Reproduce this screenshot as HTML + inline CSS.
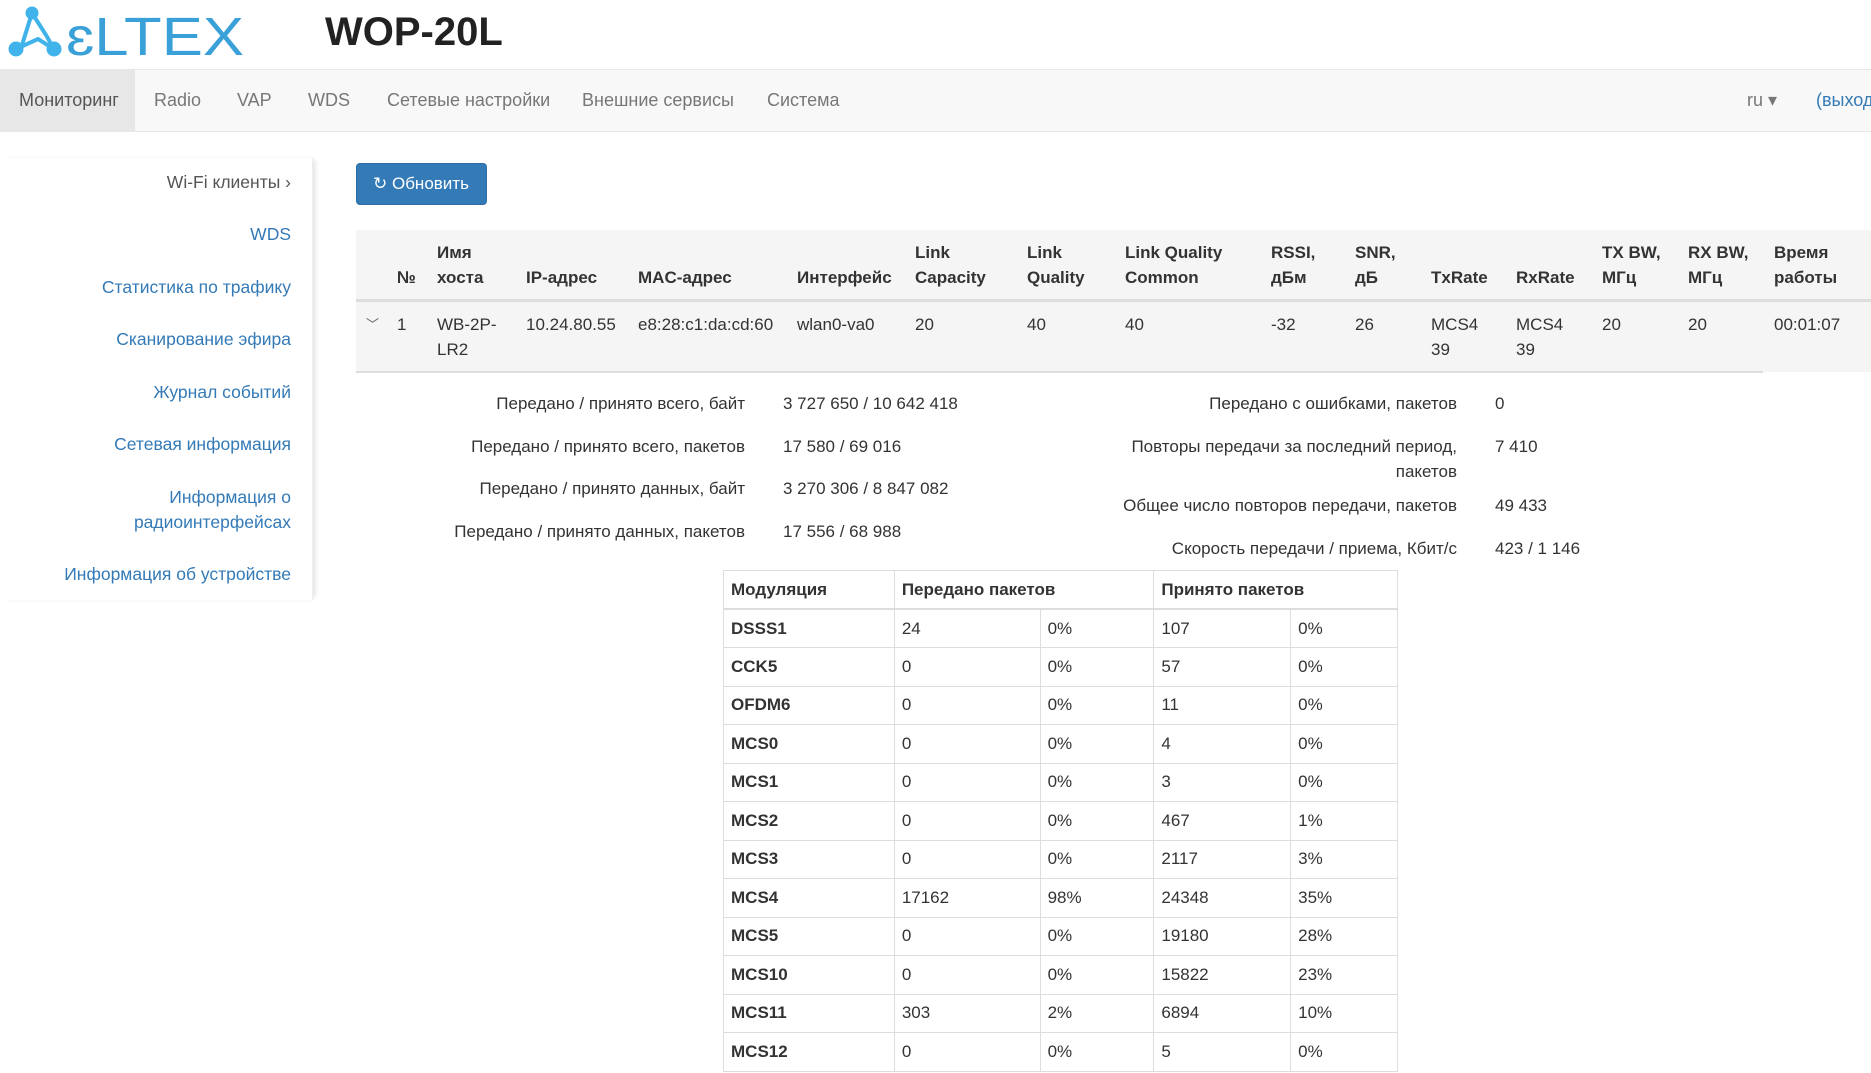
<!DOCTYPE html>
<html><head><meta charset="utf-8"><style>
*{box-sizing:border-box;margin:0;padding:0}
body{width:1871px;height:1073px;overflow:hidden;background:#fff;font-family:"Liberation Sans",Arial,sans-serif;color:#333;font-size:17px;position:relative}
.a{position:absolute;white-space:nowrap}
.nav{position:absolute;left:0;top:69px;width:1871px;height:63px;background:#f8f8f8;border-top:1px solid #e7e7e7;border-bottom:1px solid #e7e7e7}
.nav .act{position:absolute;left:0;top:0;width:135px;height:62px;background:#e7e7e7}
.nav span{position:absolute;top:20px;font-size:18px;color:#777}
.side{position:absolute;left:0;top:158px;width:313px;height:442px;border-right:1px solid #eee;box-shadow:4px 0 5px -2px rgba(0,0,0,.12)}
.side a{position:absolute;right:21px;color:#337ab7;text-decoration:none;font-size:17.5px;text-align:right;line-height:25px}
.btn{position:absolute;left:356px;top:163px;width:131px;height:42px;background:#337ab7;border:1px solid #2e6da4;border-radius:4px;color:#fff;font-size:17px;line-height:40px;padding-left:16px}
.th{position:absolute;font-weight:bold;font-size:17px;line-height:25px;color:#333}
.td{position:absolute;font-size:17px;line-height:25px;color:#333}
.lbl{position:absolute;text-align:right;font-size:17px;line-height:25px}
table.m{position:absolute;left:723px;top:570px;width:675px;border-collapse:collapse;font-size:17px}
table.m td,table.m th{border:1px solid #ddd;height:38.5px;padding:0 7px;text-align:left;vertical-align:middle}
table.m th{border-bottom:2px solid #ddd}
table.m td:first-child{font-weight:bold}
</style></head><body>
<svg class="a" style="left:8px;top:5px" width="240" height="54" viewBox="0 0 240 54">
<g fill="#40b4ea" stroke="#40b4ea"><circle cx="24" cy="8" r="6"/><circle cx="8" cy="44" r="7"/><circle cx="46" cy="44" r="7"/>
<path d="M24 8 L14 40 M24 8 L38 30 L46 44 M8 44 L30 34 L46 44" stroke-width="4" fill="none"/></g>
<text x="58" y="50" font-family="Liberation Sans,sans-serif" font-size="54" fill="#3aa0d8" textLength="178" lengthAdjust="spacingAndGlyphs">ɛLTEX</text>
</svg>
<div class="a" style="left:325px;top:10px;font-size:40px;font-weight:bold;color:#222">WOP-20L</div>
<div class="nav"><div class="act"></div>
<span style="left:19px;color:#555">Мониторинг</span><span style="left:154px">Radio</span><span style="left:237px">VAP</span><span style="left:308px">WDS</span><span style="left:387px">Сетевые настройки</span><span style="left:582px">Внешние сервисы</span><span style="left:767px">Система</span><span style="left:1747px">ru ▾</span><span style="left:1816px;color:#337ab7">(выход</span></div>
<div class="side">
<a style="top:12px;color:#555">Wi-Fi клиенты ›</a>
<a style="top:64px">WDS</a><a style="top:117px">Статистика по трафику</a><a style="top:169px">Сканирование эфира</a><a style="top:222px">Журнал событий</a><a style="top:274px">Сетевая информация</a><a style="top:327px">Информация о<br>радиоинтерфейсах</a><a style="top:404px">Информация об устройстве</a></div>
<div class="btn">↻ Обновить</div>
<div class="a" style="left:356px;top:230px;width:1515px;height:72px;background:#f5f5f5;border-bottom:3px solid #ddd"></div>
<div class="a" style="left:356px;top:302px;width:1515px;height:70px;background:#f5f5f5"></div>
<div class="a" style="left:356px;top:371px;width:1407px;height:2px;background:#ddd"></div>
<div class="th" style="left:397px;top:265px">№</div>
<div class="th" style="left:437px;top:240px">Имя<br>хоста</div>
<div class="th" style="left:526px;top:265px">IP-адрес</div>
<div class="th" style="left:638px;top:265px">MAC-адрес</div>
<div class="th" style="left:797px;top:265px">Интерфейс</div>
<div class="th" style="left:915px;top:240px">Link<br>Capacity</div>
<div class="th" style="left:1027px;top:240px">Link<br>Quality</div>
<div class="th" style="left:1125px;top:240px">Link Quality<br>Common</div>
<div class="th" style="left:1271px;top:240px">RSSI,<br>дБм</div>
<div class="th" style="left:1355px;top:240px">SNR,<br>дБ</div>
<div class="th" style="left:1431px;top:265px">TxRate</div>
<div class="th" style="left:1516px;top:265px">RxRate</div>
<div class="th" style="left:1602px;top:240px">TX BW,<br>МГц</div>
<div class="th" style="left:1688px;top:240px">RX BW,<br>МГц</div>
<div class="th" style="left:1774px;top:240px">Время<br>работы</div>
<div class="td" style="left:366px;top:312px;font-size:13px;color:#666">﹀</div>
<div class="td" style="left:397px;top:312px">1</div>
<div class="td" style="left:437px;top:312px">WB-2P-<br>LR2</div>
<div class="td" style="left:526px;top:312px">10.24.80.55</div>
<div class="td" style="left:638px;top:312px">e8:28:c1:da:cd:60</div>
<div class="td" style="left:797px;top:312px">wlan0-va0</div>
<div class="td" style="left:915px;top:312px">20</div>
<div class="td" style="left:1027px;top:312px">40</div>
<div class="td" style="left:1125px;top:312px">40</div>
<div class="td" style="left:1271px;top:312px">-32</div>
<div class="td" style="left:1355px;top:312px">26</div>
<div class="td" style="left:1431px;top:312px">MCS4<br>39</div>
<div class="td" style="left:1516px;top:312px">MCS4<br>39</div>
<div class="td" style="left:1602px;top:312px">20</div>
<div class="td" style="left:1688px;top:312px">20</div>
<div class="td" style="left:1774px;top:312px">00:01:07</div>

<div class="lbl" style="right:1126px;top:391px">Передано / принято всего, байт</div>
<div class="lbl" style="right:1126px;top:434px">Передано / принято всего, пакетов</div>
<div class="lbl" style="right:1126px;top:476px">Передано / принято данных, байт</div>
<div class="lbl" style="right:1126px;top:519px">Передано / принято данных, пакетов</div>
<div class="td" style="left:783px;top:391px">3 727 650 / 10 642 418</div>
<div class="td" style="left:783px;top:434px">17 580 / 69 016</div>
<div class="td" style="left:783px;top:476px">3 270 306 / 8 847 082</div>
<div class="td" style="left:783px;top:519px">17 556 / 68 988</div>
<div class="lbl" style="right:414px;top:391px">Передано с ошибками, пакетов</div>
<div class="lbl" style="right:414px;top:434px">Повторы передачи за последний период,<br>пакетов</div>
<div class="lbl" style="right:414px;top:493px">Общее число повторов передачи, пакетов</div>
<div class="lbl" style="right:414px;top:536px">Скорость передачи / приема, Кбит/с</div>
<div class="td" style="left:1495px;top:391px">0</div>
<div class="td" style="left:1495px;top:434px">7 410</div>
<div class="td" style="left:1495px;top:493px">49 433</div>
<div class="td" style="left:1495px;top:536px">423 / 1 146</div>

<table class="m">
<colgroup><col style="width:171px"><col style="width:146px"><col style="width:114px"><col style="width:137px"><col style="width:107px"></colgroup>
<tr><th>Модуляция</th><th colspan="2">Передано пакетов</th><th colspan="2">Принято пакетов</th></tr>
<tr><td>DSSS1</td><td>24</td><td>0%</td><td>107</td><td>0%</td></tr>
<tr><td>CCK5</td><td>0</td><td>0%</td><td>57</td><td>0%</td></tr>
<tr><td>OFDM6</td><td>0</td><td>0%</td><td>11</td><td>0%</td></tr>
<tr><td>MCS0</td><td>0</td><td>0%</td><td>4</td><td>0%</td></tr>
<tr><td>MCS1</td><td>0</td><td>0%</td><td>3</td><td>0%</td></tr>
<tr><td>MCS2</td><td>0</td><td>0%</td><td>467</td><td>1%</td></tr>
<tr><td>MCS3</td><td>0</td><td>0%</td><td>2117</td><td>3%</td></tr>
<tr><td>MCS4</td><td>17162</td><td>98%</td><td>24348</td><td>35%</td></tr>
<tr><td>MCS5</td><td>0</td><td>0%</td><td>19180</td><td>28%</td></tr>
<tr><td>MCS10</td><td>0</td><td>0%</td><td>15822</td><td>23%</td></tr>
<tr><td>MCS11</td><td>303</td><td>2%</td><td>6894</td><td>10%</td></tr>
<tr><td>MCS12</td><td>0</td><td>0%</td><td>5</td><td>0%</td></tr>
</table>
</body></html>
